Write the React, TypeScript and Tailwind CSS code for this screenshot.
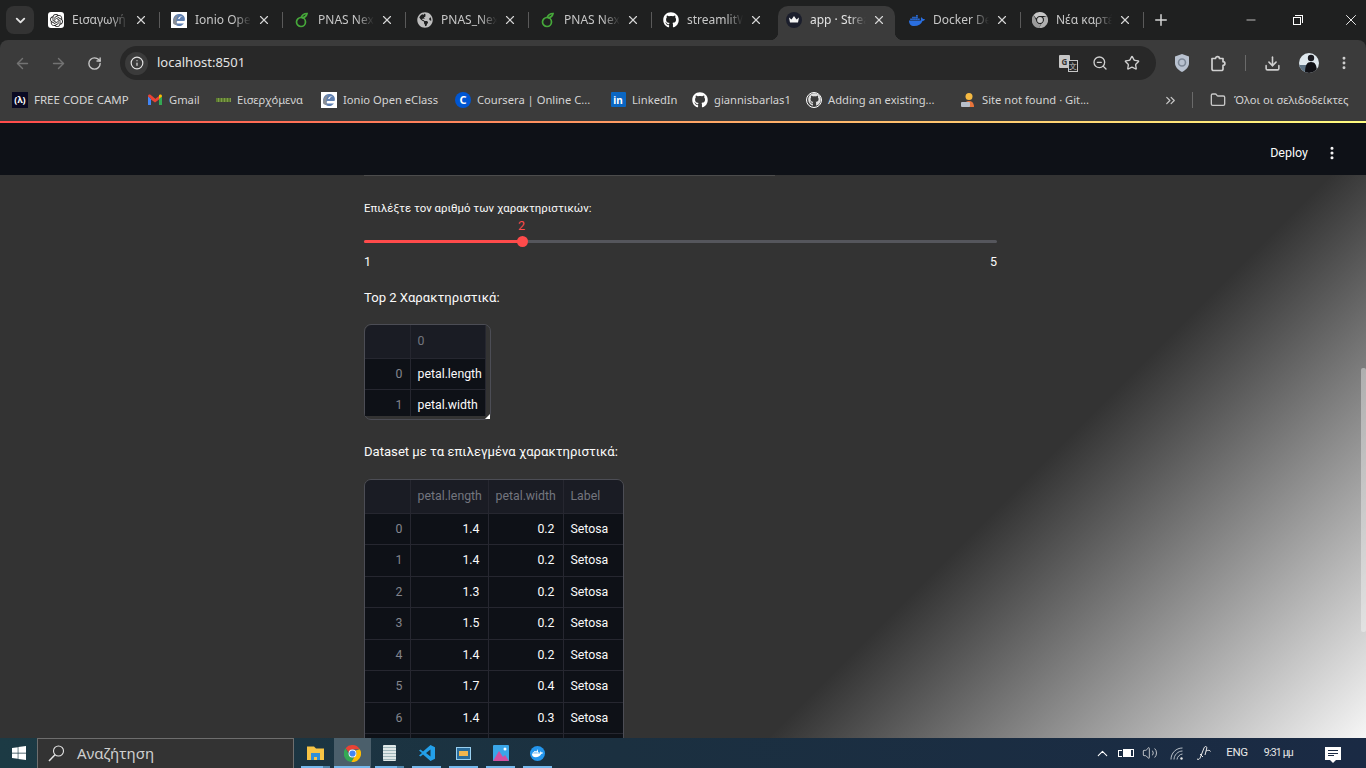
import { ArrowLeft, ArrowRight, RotateCw, Info, Star, ZoomOut, Download, EllipsisVertical, ChevronDown, ChevronUp, ChevronsRight, Folder, Plus, X, Minus, Volume2 } from "lucide-react";
import { FaGithub, FaDocker, FaWindows, FaGlobeAmericas } from "react-icons/fa";
import { SiOpenai } from "react-icons/si";
import type { ReactNode } from "react";

const sans = "font-['Noto_Sans','Open_Sans',sans-serif]";
const app = "font-['Roboto','Noto_Sans',sans-serif]";

// small logos that the icon packs don't carry
function Ionio({ size = 16 }: { size?: number }) {
  return (
    <svg width={size} height={size} viewBox="0 0 16 16">
      <rect width="16" height="16" fill="#fff" />
      <path d="M8 2a6 6 0 1 0 5 9.500H7C5 11.500 5 9 7 9h6.500C15 5 12 2 8 2z" fill="#5f7fb0" />
      <path d="M7 7c.5-2 2.500-3 5-3-2 .5-3 1.500-3.500 3z" fill="#fff" />
      <path d="M2 11C2 7 4 4 7 3 5 6 5 10 6 13 4 13 2.500 12.500 2 11z" fill="#8a8f96" />
    </svg>
  );
}

function Pnas() {
  return (
    <svg width="16" height="16" viewBox="0 0 16 16" fill="none" stroke="#46a83a" strokeWidth="1.700">
      <circle cx="7" cy="10" r="4.500" />
      <path d="M7 6c1-3 3-4.500 6-4.500C12.500 4 11 5.500 8 6" />
    </svg>
  );
}

function StreamlitFav() {
  return (
    <svg width="16" height="16" viewBox="0 0 16 16">
      <circle cx="8" cy="8" r="8" fill="#1b1e2c" />
      <path d="M3 5.500 5.500 7.500 8 4l2.500 3.500L13 5.500 12 10.500H4z" fill="#f3f3f3" />
    </svg>
  );
}

function ChromeIcon({ size = 16, mono = false }: { size?: number; mono?: boolean }) {
  const a = mono ? "#c7c7c7" : "#ea4335";
  const b = mono ? "#9a9a9a" : "#34a853";
  const c = mono ? "#b0b0b0" : "#fbbc05";
  const d = mono ? "#1f2020" : "#fff";
  const e = mono ? "#c7c7c7" : "#4285f4";
  return (
    <svg width={size} height={size} viewBox="0 0 16 16">
      <path d="M8 0a8 8 0 0 1 6.930 4H8a4 4 0 0 0-3.700 2.500L1.500 3A8 8 0 0 1 8 0z" fill={a} />
      <path d="M1.500 3 4.800 9.500A4 4 0 0 0 9 12l-2 4A8 8 0 0 1 1.500 3z" fill={b} />
      <path d="M14.930 4A8 8 0 0 1 7 16l2.800-5A4 4 0 0 0 11 5.200L14.930 4z" fill={c} />
      <circle cx="8" cy="8" r="3.700" fill={d} />
      <circle cx="8" cy="8" r="2.900" fill={e} />
    </svg>
  );
}

function Gmail() {
  return (
    <svg width="16" height="16" viewBox="0 0 16 16">
      <path d="M1 4v9h3V7z" fill="#4285f4" />
      <path d="M15 4v9h-3V7z" fill="#34a853" />
      <path d="M1 4c0-1.500 1.500-2 2.500-1.200L8 6.500l-1 2.500L1 4.500z" fill="#ea4335" />
      <path d="M4 4 8 7l4-3v3.500L8 10.500 4 7.500z" fill="#ea4335" />
      <path d="M15 4c0-1.500-1.500-2-2.500-1.200L12 3.200V7l3-2.500z" fill="#fbbc05" />
    </svg>
  );
}

function Tab({ icon, title, active, noSep }: { icon: ReactNode; title: string; active?: boolean; noSep?: boolean }) {
  return (
    <div className="relative h-[34px] w-[123px] shrink-0">
      {active && (
        <>
          <span className="absolute inset-y-0 left-[4px] right-[2px] rounded-t-[10px] bg-[#3b3b3b]" />
          <span className="absolute bottom-0 left-[-4px] h-2 w-2 bg-[radial-gradient(circle_at_0_0,transparent_8px,#3b3b3b_8.500px)]" />
          <span className="absolute bottom-0 right-[-6px] h-2 w-2 bg-[radial-gradient(circle_at_100%_0,transparent_8px,#3b3b3b_8.500px)]" />
        </>
      )}
      <div className="relative flex h-[28px] items-center pl-3 pr-[10px]">
        <span className="flex h-4 w-4 shrink-0 items-center justify-center">{icon}</span>
        <span className={`ml-2 w-[56px] overflow-hidden whitespace-nowrap text-[12px] [mask-image:linear-gradient(to_right,black_70%,transparent)] ${active ? "text-[#e3e3e3]" : "text-[#c7c7c7]"}`}>
          {title}
        </span>
        <X size={14} strokeWidth={2} className="ml-auto mr-[1px] text-[#d5d5d5]" />
      </div>
      {!active && !noSep && <span className="absolute right-[-1px] top-[6px] h-[16px] w-px bg-[#5a5a5a]" />}
    </div>
  );
}

const tabs: { id: string; title: string; icon: ReactNode; active?: boolean; noSep?: boolean }[] = [
  { id: "gpt", title: "Εισαγωγή", icon: <span className="flex h-4 w-4 items-center justify-center rounded-[3px] bg-white"><SiOpenai size={13} color="#222" /></span> },
  { id: "ionio", title: "Ionio Open", icon: <Ionio /> },
  { id: "pnas1", title: "PNAS Next", icon: <Pnas /> },
  { id: "pnas2", title: "PNAS_Next", icon: <FaGlobeAmericas size={16} color="#bdbdbd" /> },
  { id: "pnas3", title: "PNAS Next", icon: <Pnas /> },
  { id: "gh", title: "streamlitW", icon: <FaGithub size={16} color="#fff" />, noSep: true },
  { id: "app", title: "app · Stream", icon: <StreamlitFav />, active: true },
  { id: "docker", title: "Docker De", icon: <FaDocker size={17} color="#2a6fe0" /> },
  { id: "new", title: "Νέα καρτέλα", icon: <ChromeIcon mono /> },
];

function Bookmark({ icon, label, width, size = "text-[11.200px]" }: { icon: ReactNode; label: string; width: string; size?: string }) {
  return (
    <div className={`flex shrink-0 items-center gap-[6px] ${width}`}>
      <span className="flex h-4 w-4 shrink-0 items-center justify-center">{icon}</span>
      <span className={`whitespace-nowrap text-[#d4d4d4] ${size}`}>{label}</span>
    </div>
  );
}

function Cell({ children, className = "" }: { children?: ReactNode; className?: string }) {
  return <td className={`border-b border-r border-[#262730] pl-[7px] text-[12.300px] ${className}`}>{children}</td>;
}

function TopTable() {
  return (
    <div className="relative mt-[16px] w-[127px] rounded-[7px] border border-[#4c4d55] bg-[#333] pb-[3px]">
      <div className="h-[91px] w-[121px] overflow-hidden rounded-tl-[7px]">
        <table className="w-[121px] table-fixed border-collapse">
          <tbody>
            <tr className="h-[33px] bg-[#1a1c24] text-[#74767f]">
              <Cell className="w-[45px]" />
              <Cell>0</Cell>
            </tr>
            <tr className="h-[31.500px] bg-[#0e1117]">
              <Cell className="pr-[7px] text-right text-[#83858d]">0</Cell>
              <Cell className="whitespace-nowrap text-[#fafafa]">petal.length</Cell>
            </tr>
            <tr className="h-[31.500px] bg-[#0e1117]">
              <Cell className="pr-[7px] text-right text-[#83858d]">1</Cell>
              <Cell className="whitespace-nowrap text-[#fafafa]">petal.width</Cell>
            </tr>
          </tbody>
        </table>
      </div>
      {/* resize handle */}
      <span className="absolute bottom-0 right-0 h-0 w-0 border-b-[5px] border-l-[5px] border-b-white border-l-transparent" />
    </div>
  );
}

const rows = [
  [0, "1.4", "0.2"],
  [1, "1.4", "0.2"],
  [2, "1.3", "0.2"],
  [3, "1.5", "0.2"],
  [4, "1.4", "0.2"],
  [5, "1.7", "0.4"],
  [6, "1.4", "0.3"],
  [7, "1.5", "0.2"],
];

function DataTable() {
  return (
    <div className="mt-[17px] w-[260px] overflow-hidden rounded-[7px] border border-[#4c4d55]">
      <table className="w-[258px] table-fixed border-collapse">
        <tbody>
          <tr className="h-[33px] bg-[#1a1c24] text-[#74767f]">
            <Cell className="w-[45px]" />
            <Cell className="w-[78px] whitespace-nowrap">petal.length</Cell>
            <Cell className="w-[75px] whitespace-nowrap">petal.width</Cell>
            <Cell className="border-r-0">Label</Cell>
          </tr>
          {rows.map(([i, len, wid]) => (
            <tr key={i} className="h-[31.500px] bg-[#0e1117]">
              <Cell className="pr-[7px] text-right text-[#83858d]">{i}</Cell>
              <Cell className="pr-[8px] text-right text-[#fafafa]">{len}</Cell>
              <Cell className="pr-[8px] text-right text-[#fafafa]">{wid}</Cell>
              <Cell className="border-r-0 text-[#fafafa]">Setosa</Cell>
            </tr>
          ))}
        </tbody>
      </table>
    </div>
  );
}

function TaskIcon({ children, active, stacked = false }: { children: ReactNode; active?: boolean; stacked?: boolean }) {
  return (
    <div className={`relative flex h-[30px] w-[37px] shrink-0 items-center justify-center ${active ? "bg-[#4b5f6b]" : ""}`}>
      {children}
      <span className={`absolute bottom-0 h-[2px] ${active ? "left-0 right-[1px] bg-[#76b9ed]" : "left-[4px] right-[4px]"} ${!active && stacked ? "bg-[linear-gradient(to_right,#76b9ed_75%,#4f87ad_75%)]" : ""} ${!active && !stacked ? "bg-[#76b9ed]" : ""}`} />
    </div>
  );
}

export default function App() {
  return (
    <div className={`flex h-[768px] w-[1366px] flex-col overflow-hidden bg-[#1f2020] ${sans}`}>
      {/* tab strip */}
      <div className="flex h-[40px] shrink-0 items-start bg-[#1f2020] pt-[6px]">
        <div className="ml-[6px] flex h-[28px] w-[28px] shrink-0 items-center justify-center rounded-[8px] bg-[#333]">
          <ChevronDown size={15} strokeWidth={3} className="text-[#e3e3e3]" />
        </div>
        <div className="ml-[2px] flex">
          {tabs.map((t) => (
            <Tab key={t.id} icon={t.icon} title={t.title} active={t.active} noSep={t.noSep} />
          ))}
        </div>
        <Plus size={18} strokeWidth={2} className="ml-[9px] mt-[5px] text-[#d5d5d5]" />
        <Minus size={14} strokeWidth={1.200} className="ml-[74px] mt-[7px] text-white" />
        <div className="relative ml-[35px] mt-[9px] h-[10px] w-[10px]">
          <span className="absolute left-0 top-[2px] h-[8px] w-[8px] border border-white bg-[#1f2020]" />
          <span className="absolute right-0 top-0 h-[8px] w-[8px] border-r border-t border-white" />
        </div>
        <X size={18} strokeWidth={1.200} className="ml-[39px] mt-[5px] text-white" />
      </div>

      {/* toolbar */}
      <div className="flex h-[40px] shrink-0 items-start rounded-t-[8px] bg-[#3b3b3b] pt-[6px]">
        <div className="flex h-[34px] items-center pl-[14px]">
          <ArrowLeft size={17} className="text-[#737373]" />
          <ArrowRight size={17} className="ml-[19px] text-[#737373]" />
          <RotateCw size={15} strokeWidth={2.200} className="ml-[20px] text-[#c7c7c7]" />
        </div>
        <div className="ml-[18px] flex h-[34px] w-[1036px] items-center rounded-full bg-[#282828] pl-[5px] pr-[16px]">
          <span className="flex h-[23px] w-[23px] items-center justify-center rounded-full bg-[#3b3b3b]">
            <Info size={14} className="text-[#e3e3e3]" />
          </span>
          <span className="ml-[9px] text-[13px] text-[#e3e3e3]">localhost:8501</span>
          <div className="ml-auto flex items-center gap-[16px]">
            <span className="relative block h-4 w-4">
              <span className="absolute left-[-1px] top-0 flex h-[13px] w-[11px] items-center justify-center rounded-[1px] bg-[#c7c7c7] text-[8px] font-bold leading-none text-[#333]">G</span>
              <span className="absolute bottom-[-1px] right-[-2px] flex h-[12px] w-[10px] items-center justify-center border border-[#c7c7c7] bg-[#282828] text-[8px] leading-none text-[#c7c7c7]">文</span>
            </span>
            <ZoomOut size={16} className="text-[#d0d0d0]" />
            <Star size={16} strokeWidth={2} className="text-[#d0d0d0]" />
          </div>
        </div>
        <div className="flex h-[34px] items-center">
          <svg width="16" height="18" viewBox="0 0 16 18" className="ml-[18px]">
            <path d="M8 0 15 2.500V9c0 4-3 7-7 9-4-2-7-5-7-9V2.500z" fill="#b9c2d0" />
            <circle cx="8" cy="8.500" r="3.500" fill="none" stroke="#7c8796" strokeWidth="1.600" />
          </svg>
          {/* chrome's extension glyph, lucide's puzzle has other cut-outs */}
          <svg width="17" height="17" viewBox="0 0 17 17" fill="none" stroke="#d0d0d0" strokeWidth="1.700" strokeLinejoin="round" className="ml-[20px]">
            <path d="M2 3.500h3.500c0-2.500 4-2.500 4 0H13v3.200c2.500 0 2.500 3.600 0 3.600V14a1.500 1.500 0 0 1-1.500 1.500H3.500A1.500 1.500 0 0 1 2 14z" />
          </svg>
          <span className="ml-[18px] h-[16px] w-px bg-[#6a6a6a]" />
          <Download size={17} strokeWidth={2.200} className="ml-[18px] text-[#d0d0d0]" />
          <svg width="20" height="20" viewBox="0 0 20 20" className="ml-[18px]">
            <defs>
              <clipPath id="avatar-clip">
                <circle cx="10" cy="10" r="10" />
              </clipPath>
            </defs>
            <g clipPath="url(#avatar-clip)">
              <rect width="20" height="20" fill="#dfe8ee" />
              <rect y="12" width="8" height="8" fill="#5c7183" />
              <circle cx="12" cy="5" r="3.200" fill="#1a1a20" />
              <path d="M6 20c0-8 2-11 6-11s6 3 6 11z" fill="#101015" />
            </g>
          </svg>
          <EllipsisVertical size={16} strokeWidth={2.400} className="ml-[17px] text-[#d0d0d0]" />
        </div>
      </div>

      {/* bookmarks bar */}
      <div className="flex h-[41px] shrink-0 items-center bg-[#3b3b3b] pl-[12px] pb-[1px]">
        <Bookmark width="w-[135px]" size="text-[11.500px]" label="FREE CODE CAMP" icon={<span className="flex h-4 w-4 items-center justify-center bg-[#0a0a23] text-[9px] font-bold text-white">(λ)</span>} />
        <Bookmark width="w-[68px]" label="Gmail" icon={<Gmail />} />
        <Bookmark width="w-[106px]" label="Εισερχόμενα" icon={<span className="h-[4px] w-[15px] bg-[repeating-linear-gradient(to_right,#5a7a2e_0,#5a7a2e_2px,#7f9a4a_2px,#7f9a4a_3px)]" />} />
        <Bookmark width="w-[134px]" label="Ionio Open eClass" icon={<Ionio />} />
        <Bookmark width="w-[155px]" label="Coursera | Online C..." icon={<span className="flex h-4 w-4 items-center justify-center rounded-full bg-[#0056d2] text-[11px] font-bold leading-none text-white">C</span>} />
        <Bookmark width="w-[82px]" label="LinkedIn" icon={<span className="flex h-[15px] w-[15px] items-center justify-center rounded-[1px] bg-[#0a66c2] text-[10px] font-bold leading-none text-white">in</span>} />
        <Bookmark width="w-[114px]" label="giannisbarlas1" icon={<FaGithub size={16} color="#fff" />} />
        <Bookmark width="w-[154px]" label="Adding an existing..." icon={<span className="flex h-4 w-4 items-center justify-center rounded-full border border-white"><FaGithub size={13} color="#ddd" /></span>} />
        <Bookmark width="w-[203px]" label="Site not found · Git..." icon={
          <svg width="16" height="16" viewBox="0 0 16 16">
            <circle cx="9" cy="4.500" r="3.500" fill="#f5b942" />
            <path d="M4 15c0-4 2-6 5-6s5 2 5 6z" fill="#e8743b" />
            <rect x="1" y="10" width="9" height="5" rx="1" fill="#b8c0cc" />
          </svg>
        } />
        <ChevronsRight size={15} className="text-[#c7c7c7]" />
        <span className="ml-[14px] h-[16px] w-px bg-[#6a6a6a]" />
        <Folder size={16} className="ml-[17px] text-[#c7c7c7]" />
        <span className="ml-[8px] whitespace-nowrap text-[11.200px] text-[#d4d4d4]">Όλοι οι σελιδοδείκτες</span>
      </div>

      {/* streamlit decoration line */}
      <div className="h-[2px] shrink-0 bg-[linear-gradient(to_right,#ff4b4b,#fffd80)]" />

      {/* streamlit header */}
      <div className={`flex h-[52px] shrink-0 items-center justify-end bg-[#0e1117] pr-[26px] pt-[8px] ${app}`}>
        <span className="text-[12.500px] text-[#fafafa]">Deploy</span>
        <EllipsisVertical size={16} strokeWidth={2.600} className="ml-[16px] text-[#fafafa]" />
      </div>

      {/* main area */}
      <div className={`relative flex-1 overflow-hidden bg-[linear-gradient(135deg,#333_69%,#f6f6f6_100%)] pl-[364px] text-[#fafafa] ${app}`}>
        <div className="h-px w-[411px] bg-[#4c4c4c]" />
        <div className="w-[633px]">
          <p className="mt-[23px] text-[11.400px] leading-[18px]">Επιλέξτε τον αριθμό των χαρακτηριστικών:</p>
          <div className="relative mt-[23px] h-[3px] rounded-full bg-[#55565c]">
            <div className="h-full w-[158px] rounded-full bg-[#ff4b4b]" />
            <span className="absolute left-[153px] top-[-4px] h-[11px] w-[11px] rounded-full bg-[#ff4b4b]" />
            <span className="absolute left-[154px] top-[-22px] text-[12.500px] leading-[16px] text-[#ff4b4b]">2</span>
          </div>
          <div className="mt-[11px] flex justify-between text-[12.500px] leading-[16px]">
            <span>1</span>
            <span>5</span>
          </div>
          <p className="mt-[18px] text-[13.100px] leading-[20px]">Top 2 Χαρακτηριστικά:</p>
          <TopTable />
          <p className="mt-[22px] text-[13.100px] leading-[20px]">Dataset με τα επιλεγμένα χαρακτηριστικά:</p>
          <DataTable />
        </div>
        {/* scrollbar */}
        <span className="absolute right-0 top-[193px] h-[264px] w-[5px] rounded-[2px] bg-[#fafafa]/40" />
      </div>

      {/* windows taskbar */}
      <div className={`flex h-[30px] shrink-0 items-center bg-[linear-gradient(to_right,#1c3a44,#1b3040_45%,#1a2a44)] text-[#e8e8e8] ${app}`}>
        <div className="flex w-[37px] justify-center">
          <FaWindows size={16} color="#fff" />
        </div>
        <div className="flex h-[30px] w-[257px] items-center border border-b-0 border-[#6e6e6e] bg-[#333] pl-[10px]">
          <svg width="17" height="17" viewBox="0 0 17 17" fill="none" stroke="#e4e4e4" strokeWidth="1.100">
            <circle cx="10.500" cy="6" r="5" />
            <path d="M7 9.700 1 16" strokeWidth="1.500" />
          </svg>
          <span className={`ml-[12px] text-[15px] text-[#cfcfcf] ${sans}`}>Αναζήτηση</span>
        </div>
        <div className="ml-[3px] flex">
          <TaskIcon stacked>
            <svg width="17" height="16" viewBox="0 0 17 16">
              <path d="M0 1.500h7l2 2h8V15H0z" fill="#f6c445" />
              <path d="M4 8h9v7h-3v-3H7v3H4z" fill="#2f8fd8" />
            </svg>
          </TaskIcon>
          <TaskIcon active>
            <ChromeIcon size={17} />
          </TaskIcon>
          <TaskIcon stacked>
            <span className="h-[16px] w-[13px] rounded-[1px] bg-[repeating-linear-gradient(to_bottom,#dfe8e8_0,#dfe8e8_2px,#9fb7bb_2px,#9fb7bb_3px)]" />
          </TaskIcon>
          <TaskIcon>
            <svg width="16" height="16" viewBox="0 0 16 16">
              <path d="M11.500 0 16 2.200v11.600L11.500 16 4 9.500 1.500 11.500 0 10.500 3 8 0 5.500 1.500 4.500 4 6.500zM11.500 4.500 7 8l4.500 3.500z" fill="#23a0ea" />
            </svg>
          </TaskIcon>
          <TaskIcon>
            <span className="flex h-[13px] w-[15px] items-center justify-center border border-[#9ad0f0] bg-[#2a6d9c]">
              <span className="h-[5px] w-[9px] bg-[#f0b64e]" />
            </span>
          </TaskIcon>
          <TaskIcon>
            <svg width="16" height="16" viewBox="0 0 16 16">
              <rect width="16" height="16" rx="1" fill="#3aa6e8" />
              <path d="M0 16 6 6l4 6 2-2 4 6z" fill="#d24fa0" />
              <circle cx="12" cy="4" r="1.500" fill="#fff" />
            </svg>
          </TaskIcon>
          <TaskIcon>
            <span className="flex h-[15px] w-[15px] items-center justify-center rounded-full bg-[#2496ed]">
              <FaDocker size={11} color="#fff" />
            </span>
          </TaskIcon>
        </div>
        <div className="ml-auto flex items-center">
          <ChevronUp size={17} strokeWidth={1.500} className="text-white" />
          <span className="ml-[7px] flex items-center">
            <span className="h-[7px] w-[4px] border-y border-l border-white" />
            <span className="ml-px h-[8px] w-[11px] border border-white bg-[linear-gradient(to_right,#fff_75%,transparent_75%)]" />
          </span>
          <Volume2 size={16} strokeWidth={1.200} className="ml-[8px] text-[#e8e8e8]" />
          {/* windows 10 wifi: quarter arcs toward the bottom right */}
          <svg width="13" height="13" viewBox="0 0 13 13" fill="none" stroke="#b9c0c8" strokeWidth="1" className="ml-[12px]">
            <path d="M1 12.500C1 6 6 1 12.500 1M4 12.500C4 8 8 4 12.500 4M7 12.500C7 10 10 7 12.500 7" />
            <circle cx="11.500" cy="11.500" r="1.200" fill="#e8e8e8" stroke="none" />
          </svg>
          <svg width="16" height="16" viewBox="0 0 16 16" fill="none" stroke="#e8e8e8" strokeWidth="1" className="ml-[13px]">
            <path d="M1 14c1.500 1 3 0 3.500-2L8 3c.8-2 3-2 2.800 0L9 10M10 6c2-1 4-1 4.500.5M4 9l3 3" />
          </svg>
          <span className="ml-[14px] text-[11.500px] tracking-[-0.3px]">ENG</span>
          <span className="ml-[16px] text-[10.500px] tracking-[-0.8px]">9:31 μμ</span>
          <span className="relative ml-[32px] mr-[25px] flex h-[13px] w-[16px] flex-col justify-center gap-[1.500px] bg-white px-[3px]">
            <span className="h-px bg-[#1a2a44]" />
            <span className="h-px bg-[#1a2a44]" />
            <span className="h-px w-[6px] bg-[#1a2a44]" />
            <span className="absolute bottom-[-3px] left-[5px] h-0 w-0 border-x-[3px] border-t-[3px] border-x-transparent border-t-white" />
          </span>
        </div>
      </div>
    </div>
  );
}
